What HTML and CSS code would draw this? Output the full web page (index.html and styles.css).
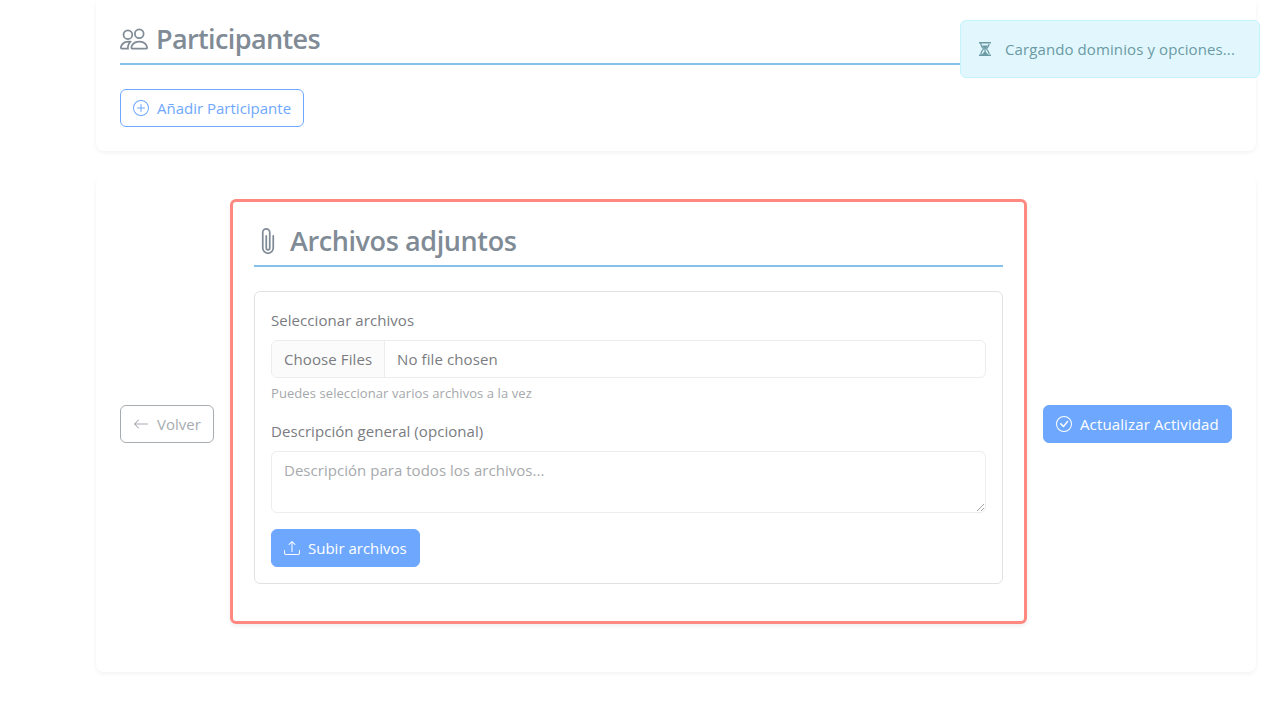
FILE: index.html
```html
<!DOCTYPE html>
<html lang="es">
<head>
<meta charset="utf-8">
<title>Actividad</title>
<link rel="stylesheet" href="styles.css">
</head>
<body>
<main class="page">
  <section class="panel participants">
    <h3 class="heading people-heading">
      <svg class="icon-lg" viewBox="0 0 16 16"><path d="M15 14s1 0 1-1-1-4-5-4-5 3-5 4 1 1 1 1zm-7.978-1L7 12.996c.001-.264.167-1.03.76-1.72C8.312 10.629 9.282 10 11 10c1.717 0 2.687.63 3.24 1.276.593.69.758 1.457.76 1.72l-.008.002-.014.002zM11 7a2 2 0 1 0 0-4 2 2 0 0 0 0 4m3-2a3 3 0 1 1-6 0 3 3 0 0 1 6 0M6.936 9.28a6 6 0 0 0-1.23-.247A7 7 0 0 0 5 9c-4 0-5 3-5 4q0 1 1 1h4.216A2.24 2.24 0 0 1 5 13c0-1.01.377-2.042 1.09-2.904.243-.294.526-.569.846-.816M4.92 10A5.5 5.5 0 0 0 4 13H1c0-.26.164-1.03.76-1.724.545-.636 1.492-1.256 3.16-1.275ZM1.5 5.5a3 3 0 1 1 6 0 3 3 0 0 1-6 0m3-2a2 2 0 1 0 0 4 2 2 0 0 0 0-4"/></svg>
      <span>Participantes</span>
    </h3>
    <button class="btn btn-outline add">
      <svg class="icon" viewBox="0 0 16 16"><path d="M8 15A7 7 0 1 1 8 1a7 7 0 0 1 0 14m0 1A8 8 0 1 0 8 0a8 8 0 0 0 0 16"/><path d="M8 4a.5.5 0 0 1 .5.5v3h3a.5.5 0 0 1 0 1h-3v3a.5.5 0 0 1-1 0v-3h-3a.5.5 0 0 1 0-1h3v-3A.5.5 0 0 1 8 4"/></svg>
      <span>Añadir Participante</span>
    </button>
  </section>

  <section class="panel actions">
    <button class="btn btn-muted back">
      <svg class="icon" viewBox="0 0 16 16"><path fill-rule="evenodd" d="M15 8a.5.5 0 0 0-.5-.5H2.707l3.147-3.146a.5.5 0 1 0-.708-.708l-4 4a.5.5 0 0 0 0 .708l4 4a.5.5 0 0 0 .708-.708L2.707 8.5H14.5A.5.5 0 0 0 15 8"/></svg>
      <span>Volver</span>
    </button>
    <div class="attachments">
      <h3 class="heading files-heading">
        <svg class="icon-lg" viewBox="0 0 16 16"><path d="M4.5 3a2.5 2.5 0 0 1 5 0v9a1.5 1.5 0 0 1-3 0V5a.5.5 0 0 1 1 0v7a.5.5 0 0 0 1 0V3a1.5 1.5 0 1 0-3 0v9a2.5 2.5 0 0 0 5 0V5a.5.5 0 0 1 1 0v7a3.5 3.5 0 1 1-7 0z"/></svg>
        <span>Archivos adjuntos</span>
      </h3>
      <div class="upload-card">
        <div class="label">Seleccionar archivos</div>
        <div class="file-input">
          <span class="file-button">Choose Files</span>
          <span class="file-name">No file chosen</span>
        </div>
        <div class="hint">Puedes seleccionar varios archivos a la vez</div>
        <label class="label" for="description">Descripción general (opcional)</label>
        <textarea class="description" id="description" placeholder="Descripción para todos los archivos..."></textarea>
        <button class="btn btn-primary upload">
          <svg class="icon" viewBox="0 0 16 16"><path d="M.5 9.9a.5.5 0 0 1 .5.5v2.5a1 1 0 0 0 1 1h12a1 1 0 0 0 1-1v-2.5a.5.5 0 0 1 1 0v2.5a2 2 0 0 1-2 2H2a2 2 0 0 1-2-2v-2.5a.5.5 0 0 1 .5-.5"/><path d="M7.646 1.146a.5.5 0 0 1 .708 0l3 3a.5.5 0 0 1-.708.708L8.5 2.707V11.5a.5.5 0 0 1-1 0V2.707L5.354 4.854a.5.5 0 1 1-.708-.708z"/></svg>
          <span>Subir archivos</span>
        </button>
      </div>
    </div>
    <button class="btn btn-primary update">
      <svg class="icon" viewBox="0 0 16 16"><path d="M8 15A7 7 0 1 1 8 1a7 7 0 0 1 0 14m0 1A8 8 0 1 0 8 0a8 8 0 0 0 0 16"/><path d="m10.97 4.97-.02.022-3.473 4.425-2.093-2.094a.75.75 0 0 0-1.06 1.06L6.97 11.03a.75.75 0 0 0 1.079-.02l3.992-4.99a.75.75 0 0 0-1.071-1.05"/></svg>
      <span>Actualizar Actividad</span>
    </button>
  </section>
</main>
<div class="toast">
  <svg class="hourglass" viewBox="0 0 12 14"><path d="M0 0h12v1.4H0zM0 12.6h12V14H0zM1.3 1h1.2c0 2.6 1.2 4 2.7 6-1.5 2-2.7 3.4-2.7 6H1.3c0-3 1-4.5 2.6-6C2.3 5.5 1.3 4 1.3 1zM10.7 1H9.5c0 2.6-1.2 4-2.7 6 1.5 2 2.7 3.4 2.7 6h1.2c0-3-1-4.5-2.6-6 1.600-1.500 2.600-3 2.600-6zM3 3.500h6L6.600 7v2.500L9 12.600H3l2.400-3.100V7z"/></svg>
  <span>Cargando dominios y opciones...</span>
</div>
</body>
</html>
```
FILE: styles.css
```css
* { box-sizing: border-box; }
body {
  margin: 0;
  height: 720px;
  overflow: hidden;
  background: #fff;
  color: #7a7c7f;
  font: 15px/24px "Open Sans", "Noto Sans", sans-serif;
}
.page {
  display: flex;
  flex-direction: column;
  gap: 24px;
  width: 1160px;
  margin-left: 96px;
}
.panel {
  background: #fff;
  border-radius: 8px;
  padding: 24px;
  box-shadow: 0 2px 4px rgba(0, 0, 0, .05);
}
.participants { margin-top: -3px; height: 154px; }
.actions {
  display: flex;
  align-items: center;
  gap: 16px;
  height: 497px;
}
.heading {
  display: flex;
  align-items: center;
  gap: 8px;
  height: 44px;
  margin: 0 0 24px;
  padding: 2px 0 8px;
  border-bottom: 2px solid #85c1e9;
  color: #808b96;
  font-size: 27px;
  font-weight: 600;
  line-height: 34px;
  white-space: nowrap;
}
.people-heading { letter-spacing: -.62px; }
.files-heading { letter-spacing: -.4px; }
.icon-lg { width: 28px; height: 28px; fill: currentColor; flex: none; }
.icon { width: 16px; height: 16px; fill: currentColor; flex: none; }
.btn {
  display: flex;
  align-items: center;
  gap: 8px;
  height: 38px;
  flex: none;
  padding: 0 12px;
  border: 1px solid currentColor;
  border-radius: 6px;
  background: transparent;
  font: inherit;
  white-space: nowrap;
}
.btn-outline { color: #6ea8fe; }
.btn-muted { color: #a7acb1; }
.btn-primary { background: #6ea8fe; border-color: #6ea8fe; color: #fff; }
.add { width: 184px; }
.back { width: 94px; }
.update { width: 189px; letter-spacing: .13px; }
.upload { width: 149px; }
.attachments {
  flex: 1;
  height: 425px;
  margin-bottom: 24px;
  padding: 21px;
  border: 3px solid #ff8880;
  border-radius: 6px;
  box-shadow: 0 2px 4px rgba(0, 0, 0, .07);
}
.upload-card {
  height: 293px;
  padding: 16px;
  border: 1px solid #e1e2e3;
  border-radius: 6px;
}
.label { display: block; margin-bottom: 8px; letter-spacing: .06px; }
.file-input {
  display: flex;
  align-items: center;
  height: 38px;
  overflow: hidden;
  border: 1px solid #ebecee;
  border-radius: 6px;
  letter-spacing: .1px;
}
.file-button {
  display: flex;
  align-items: center;
  width: 113px;
  height: 36px;
  padding-left: 12px;
  border-right: 1px solid #ebecee;
  background: #fbfbfb;
}
.file-name { padding-left: 12px; }
.hint {
  margin: 4px 0 16px;
  padding-top: 1px;
  height: 21px;
  color: #a5a8ab;
  font-size: 13px;
  line-height: 20px;
  letter-spacing: .08px;
}
.description {
  display: block;
  width: 100%;
  height: 62px;
  margin-bottom: 16px;
  padding: 6px 12px;
  border: 1px solid #dee2e6;
  border-radius: 6px;
  background: transparent;
  font: inherit;
  letter-spacing: .03px;
  opacity: .6;
}
.description::placeholder { color: #6c7075; }
.toast {
  position: fixed;
  top: 20px;
  right: 20px;
  display: flex;
  align-items: center;
  width: 300px;
  height: 58px;
  padding-left: 18px;
  gap: 14px;
  border: 1px solid #c5f3fc;
  border-radius: 6px;
  background: #e1f7fd;
  color: #6b9aa4;
  letter-spacing: .1px;
  white-space: nowrap;
}
.hourglass { width: 12px; height: 14px; fill: currentColor; flex: none; }
```
